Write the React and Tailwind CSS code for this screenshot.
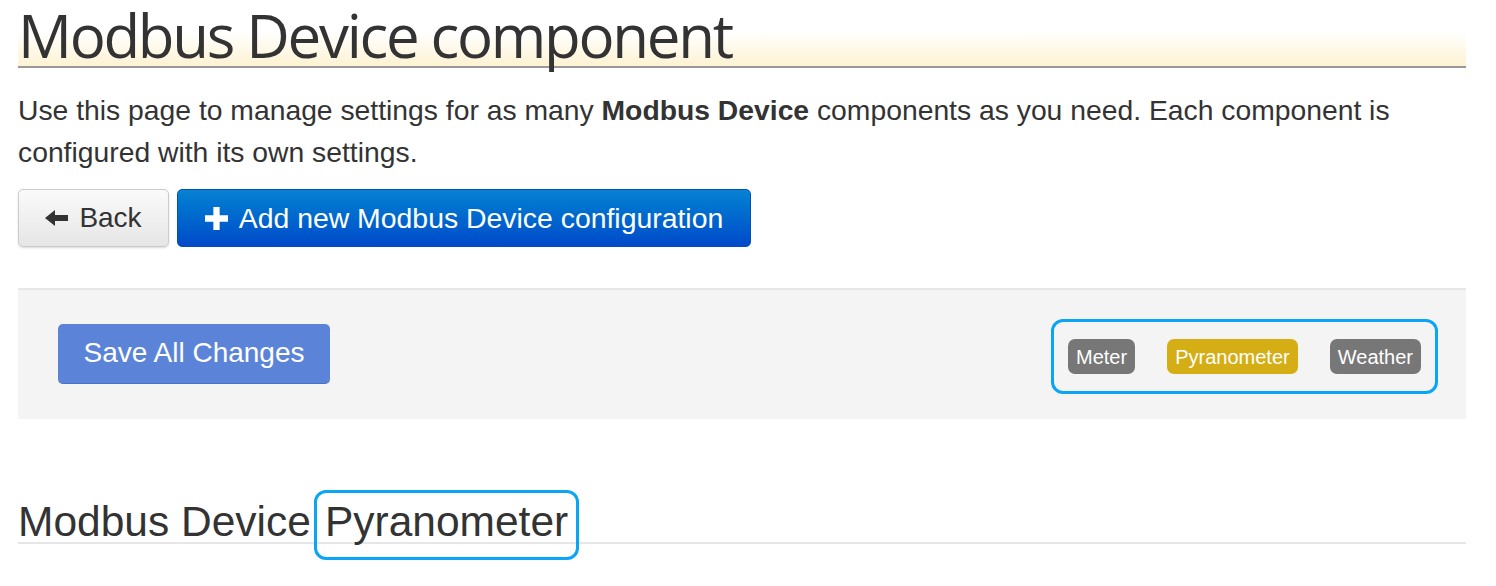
export default function App() {
  return (
    <div className="w-[1496px] h-[586px] overflow-hidden bg-white px-[18px] pr-[30px]">
      <div className="pt-[4px]">
        <h1 className="text-[60px] leading-[62px] text-[#333] border-b-2 border-[#999] bg-gradient-to-b from-white from-[45%] to-[#fdf2d2] h-[64px] tracking-[-2.3px] whitespace-nowrap" style={{ fontFamily: '"Open Sans", sans-serif' }}>
          Modbus Device component
        </h1>
      </div>
      <p className="mt-[21px] text-[28.3px] leading-[42px] text-[#333]" style={{ fontFamily: '"Liberation Sans", Arial, sans-serif' }}>
        Use this page to manage settings for as many <b>Modbus Device</b> components as you need. Each component is configured with its own settings.
      </p>
      <div className="mt-[16px] flex gap-[8px]" style={{ fontFamily: '"Liberation Sans", Arial, sans-serif' }}>
        <button className="h-[58px] w-[151px] rounded-[5px] border border-[#ccc] bg-gradient-to-b from-[#fafafa] to-[#e6e6e6] text-[28px] text-[#333] flex items-center justify-center gap-[10px] shadow-[0_1px_2px_rgba(0,0,0,0.15)]">
          <svg width="24" height="20" viewBox="0 0 24 20"><path d="M0 10 L10 2 L10 7 L23 7 L23 13 L10 13 L10 18 Z" fill="#333" /></svg>
          Back
        </button>
        <button className="h-[58px] w-[574px] rounded-[5px] border border-[#0350b5] bg-gradient-to-b from-[#0a82d2] to-[#0349c9] text-[28.4px] text-white flex items-center justify-center gap-[11px]">
          <svg width="23" height="23" viewBox="0 0 22 22"><path d="M8 0 H14 V8 H22 V14 H14 V22 H8 V14 H0 V8 H8 Z" fill="#fff" /></svg>
          Add new Modbus Device configuration
        </button>
      </div>
      <div className="mt-[41px] h-[131px] bg-[#f4f4f4] border-t-2 border-[#e6e6e6] flex items-center justify-between pl-[40px] pr-[28px]" style={{ fontFamily: '"Liberation Sans", Arial, sans-serif' }}>
        <button className="h-[60px] w-[272px] rounded-[5px] bg-[#5b84d9] border-b border-[#4b72c2] text-white text-[28px] mt-[-2px]">
          Save All Changes
        </button>
        <div className="h-[75px] w-[387px] rounded-[12px] border-[3px] border-[#0ba5f5] flex items-center justify-between px-[14px] mt-[4px]">
          <span className="h-[35px] px-[8px] rounded-[7px] bg-[#777] text-white text-[20px] flex items-center">Meter</span>
          <span className="h-[35px] px-[8px] rounded-[7px] bg-[#d5ae16] text-white text-[20px] flex items-center">Pyranometer</span>
          <span className="h-[35px] px-[8px] rounded-[7px] bg-[#777] text-white text-[20px] flex items-center">Weather</span>
        </div>
      </div>
      <div className="mt-[71px] border-b-2 border-[#e6e6e6] h-[54px] flex items-end text-[42.5px] text-[#333] leading-[48px]" style={{ fontFamily: '"Liberation Sans", Arial, sans-serif' }}>
        <span className="mb-[-4px]">Modbus Device</span>
        <span className="relative ml-[14px] mb-[-4px]">
          Pyranometer
          <span className="absolute left-[-11px] right-[-11px] top-[-8px] bottom-[-14px] rounded-[12px] border-[3px] border-[#0ba5f5]"></span>
        </span>
      </div>
    </div>
  );
}
